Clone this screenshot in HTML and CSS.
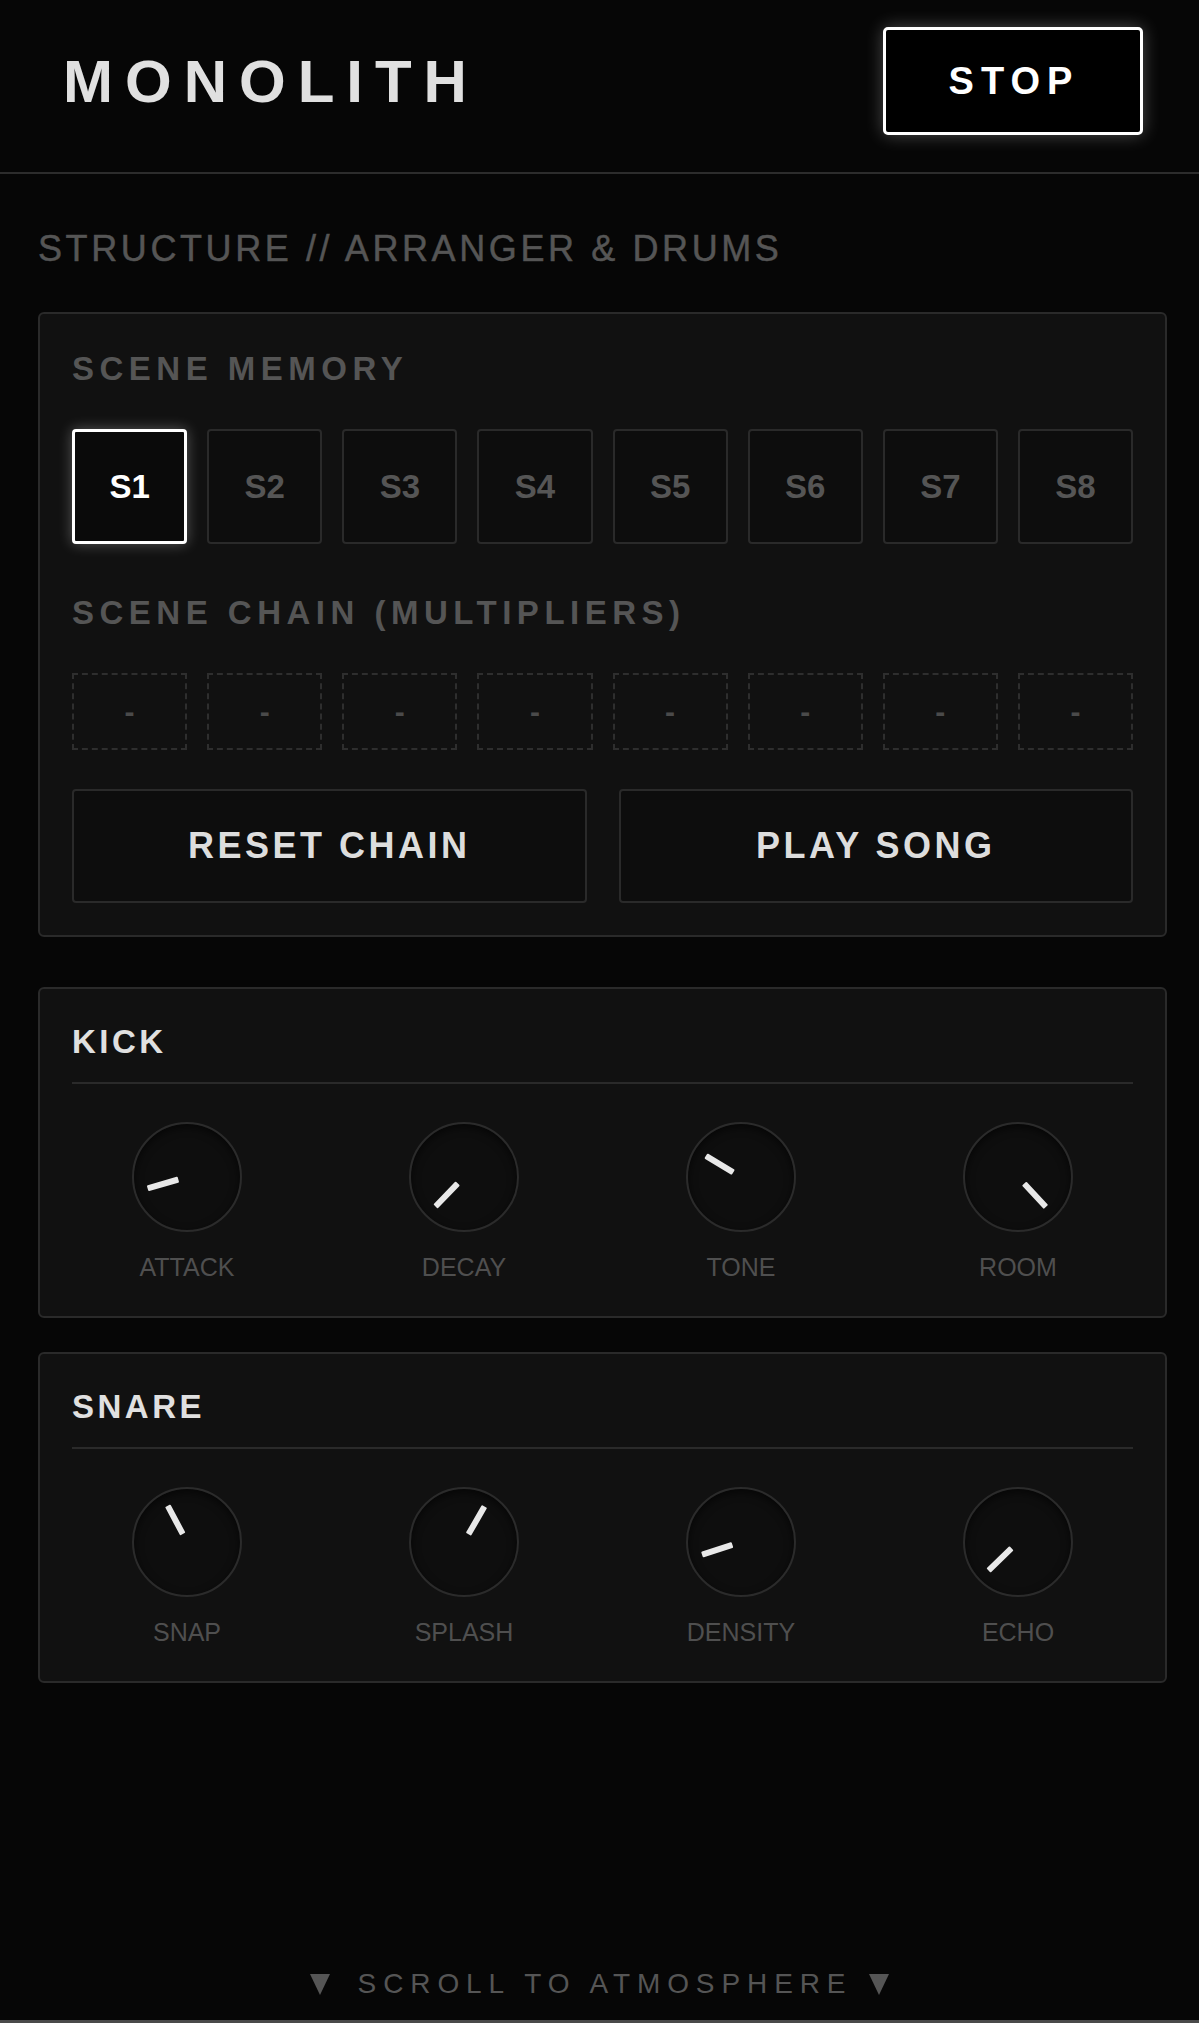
FILE: index.html
```html
<!DOCTYPE html>
<html lang="en">
<head>
    <meta charset="UTF-8">
    <title>Monolith</title>
    <link rel="stylesheet" href="styles.css">
</head>
<body>
<div class="screen">
    <header class="topbar">
        <h1 class="logo">MONOLITH</h1>
        <button class="stop-btn">STOP</button>
    </header>

    <main class="page">
        <h2 class="section-title">STRUCTURE // ARRANGER &amp; DRUMS</h2>

        <div class="panel arranger">
            <div class="panel-label">SCENE MEMORY</div>
            <div class="scene-grid">
                <button class="scene active">S1</button>
                <button class="scene">S2</button>
                <button class="scene">S3</button>
                <button class="scene">S4</button>
                <button class="scene">S5</button>
                <button class="scene">S6</button>
                <button class="scene">S7</button>
                <button class="scene">S8</button>
            </div>

            <div class="panel-label">SCENE CHAIN (MULTIPLIERS)</div>
            <div class="chain-grid">
                <div class="chain-slot">-</div>
                <div class="chain-slot">-</div>
                <div class="chain-slot">-</div>
                <div class="chain-slot">-</div>
                <div class="chain-slot">-</div>
                <div class="chain-slot">-</div>
                <div class="chain-slot">-</div>
                <div class="chain-slot">-</div>
            </div>

            <div class="action-row">
                <button class="action-btn">RESET CHAIN</button>
                <button class="action-btn">PLAY SONG</button>
            </div>
        </div>

        <div class="panel drum">
            <div class="drum-title">KICK</div>
            <div class="knob-row">
                <div class="knob-cell">
                    <div class="knob"><span class="needle" style="transform: rotate(-106deg)"></span></div>
                    <div class="knob-label">ATTACK</div>
                </div>
                <div class="knob-cell">
                    <div class="knob"><span class="needle" style="transform: rotate(-136deg)"></span></div>
                    <div class="knob-label">DECAY</div>
                </div>
                <div class="knob-cell">
                    <div class="knob"><span class="needle" style="transform: rotate(-59deg)"></span></div>
                    <div class="knob-label">TONE</div>
                </div>
                <div class="knob-cell">
                    <div class="knob"><span class="needle" style="transform: rotate(137deg)"></span></div>
                    <div class="knob-label">ROOM</div>
                </div>
            </div>
        </div>

        <div class="panel drum">
            <div class="drum-title">SNARE</div>
            <div class="knob-row">
                <div class="knob-cell">
                    <div class="knob"><span class="needle" style="transform: rotate(-28deg)"></span></div>
                    <div class="knob-label">SNAP</div>
                </div>
                <div class="knob-cell">
                    <div class="knob"><span class="needle" style="transform: rotate(30deg)"></span></div>
                    <div class="knob-label">SPLASH</div>
                </div>
                <div class="knob-cell">
                    <div class="knob"><span class="needle" style="transform: rotate(-108deg)"></span></div>
                    <div class="knob-label">DENSITY</div>
                </div>
                <div class="knob-cell">
                    <div class="knob"><span class="needle" style="transform: rotate(-134deg)"></span></div>
                    <div class="knob-label">ECHO</div>
                </div>
            </div>
        </div>
    </main>

    <div class="scroll-hint"><span>SCROLL TO ATMOSPHERE</span></div>
</div>
<section class="next-section"></section>
</body>
</html>
```

FILE: styles.css
```css
* {
    box-sizing: border-box;
}

body {
    margin: 0;
    background: #060606;
    color: #ddd;
    font-family: "Liberation Sans", Arial, Helvetica, sans-serif;
}

button {
    font-family: inherit;
    padding: 0;
    cursor: pointer;
}

.screen {
    min-height: 2020px;
    display: flex;
    flex-direction: column;
}

/* header */
.topbar {
    height: 174px;
    display: flex;
    align-items: center;
    justify-content: space-between;
    padding: 0 56px 10px 63px;
    border-bottom: 2px solid #2c2c2c;
}

.logo {
    margin: 0;
    font-size: 60px;
    font-weight: 700;
    letter-spacing: 12px;
    color: #e0e0e0;
}

.stop-btn {
    width: 260px;
    height: 108px;
    background: #000;
    border: 3px solid #fff;
    border-radius: 5px;
    color: #fff;
    font-size: 38px;
    font-weight: 700;
    letter-spacing: 7px;
    padding-left: 2px;
    box-shadow: 0 0 18px rgba(255, 255, 255, 0.28);
}

.page {
    padding: 54px 32px 0 38px;
}

.section-title {
    margin: 0 0 42px;
    font-size: 36px;
    font-weight: 400;
    letter-spacing: 3.6px;
    color: #555;
    -webkit-text-stroke: 0.5px #555;
}

.panel {
    background: #111;
    border: 2px solid #2a2a2a;
    border-radius: 6px;
}

/* arranger */
.arranger {
    padding: 36px 32px 32px;
}

.panel-label {
    font-size: 33px;
    font-weight: 700;
    letter-spacing: 5.5px;
    color: #555;
    margin-bottom: 41px;
}

.scene-grid,
.chain-grid {
    display: grid;
    grid-template-columns: repeat(8, 1fr);
    gap: 20px;
}

.scene-grid {
    margin-bottom: 50px;
}

.scene {
    height: 115px;
    background: #0d0d0d;
    border: 2px solid #2a2a2a;
    border-radius: 4px;
    color: #555;
    font-size: 33px;
    font-weight: 700;
}

.scene.active {
    border: 3px solid #fff;
    background: #0a0a0a;
    color: #fff;
    box-shadow: 0 0 14px rgba(255, 255, 255, 0.3);
}

.chain-grid {
    margin-bottom: 39px;
}

.chain-slot {
    height: 77px;
    border: 2px dashed #2e2e2e;
    display: flex;
    align-items: center;
    justify-content: center;
    color: #4a4a4a;
    font-size: 30px;
    font-weight: 700;
}

.action-row {
    display: grid;
    grid-template-columns: 1fr 1fr;
    gap: 32px;
}

.action-btn {
    height: 114px;
    background: #0d0d0d;
    border: 2px solid #2a2a2a;
    border-radius: 4px;
    color: #ddd;
    font-size: 36px;
    font-weight: 700;
    letter-spacing: 3.5px;
}

/* drums */
.drum {
    margin-top: 50px;
    padding: 34px 32px;
}

.drum + .drum {
    margin-top: 34px;
}

.drum-title {
    font-size: 33px;
    font-weight: 700;
    letter-spacing: 3.5px;
    color: #e0e0e0;
    padding-bottom: 21px;
    border-bottom: 2px solid #2a2a2a;
}

.knob-row {
    display: grid;
    grid-template-columns: repeat(4, 230px);
    justify-content: space-between;
    margin-top: 38px;
}

.knob-cell {
    display: flex;
    flex-direction: column;
    align-items: center;
}

.knob {
    position: relative;
    width: 110px;
    height: 110px;
    border-radius: 50%;
    border: 2px solid #2b2b2b;
    background: #0e0e0e;
    box-shadow: inset 0 3px 8px rgba(0, 0, 0, 0.6);
}

.needle {
    position: absolute;
    left: 50px;
    top: 12px;
    width: 6px;
    height: 32px;
    background: #e8e8e8;
    border-radius: 1px;
    transform-origin: 3px 41px;
}

.knob-label {
    margin-top: 21px;
    font-size: 25px;
    color: #4f4f4f;
}

/* bottom hint */
.scroll-hint {
    margin-top: auto;
    padding-bottom: 20px;
    display: flex;
    justify-content: center;
    align-items: center;
    font-size: 28px;
    letter-spacing: 6.9px;
    color: #555;
}

.scroll-hint::before,
.scroll-hint::after {
    content: "";
    border-left: 10px solid transparent;
    border-right: 10px solid transparent;
    border-top: 21px solid #555;
}

.scroll-hint::before {
    margin-right: 28px;
}

.scroll-hint::after {
    margin-left: 17px;
}

.next-section {
    border-top: 3px solid #4a4a4a;
}
```
